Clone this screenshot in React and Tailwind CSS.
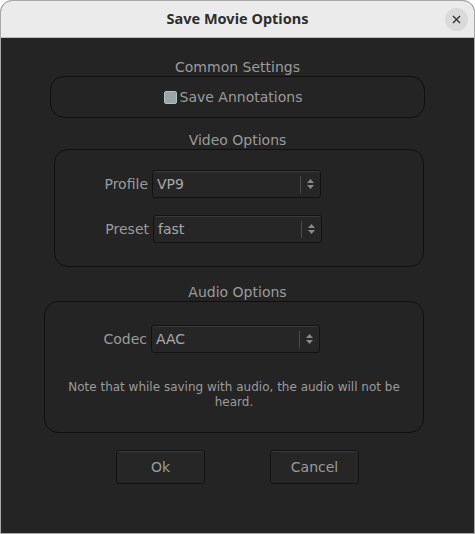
import { useState } from 'react';

const font = { fontFamily: '"DejaVu Sans", "Liberation Sans", sans-serif' };

function Combo({ value }) {
  return (
    <div className="flex h-[28px] w-[169px] items-center rounded-[3px] border border-[#121212] bg-[#262626] shadow-[inset_0_1px_0_#3a3a3a]">
      <span className="flex-1 pl-[4px] text-[14px] text-[#a8a8a8]">{value}</span>
      <span className="h-[17px] w-px bg-[#4a4a4a]" />
      <span className="flex w-[19px] flex-col items-center justify-center gap-[2px]">
        <svg width="7" height="4" viewBox="0 0 7 4"><path d="M0 4 L3.5 0 L7 4 Z" fill="#8a8a8a" /></svg>
        <svg width="7" height="4" viewBox="0 0 7 4"><path d="M0 0 L3.5 4 L7 0 Z" fill="#8a8a8a" /></svg>
      </span>
    </div>
  );
}

function Row({ label, value, labelW }) {
  return (
    <div className="flex items-center">
      <span className={`${labelW} pr-[4px] text-right text-[14px] text-[#9b9b9b]`}>{label}</span>
      <Combo value={value} />
    </div>
  );
}

function GroupTitle({ children, className }) {
  return (
    <div className={`h-[16px] text-center text-[14px] leading-[16px] text-[#9b9b9b] ${className}`}>{children}</div>
  );
}

export default function App() {
  const [saveAnn, setSaveAnn] = useState(false);

  return (
    <div className="h-[534px] w-[475px] bg-white" style={font}>
      <div className="flex h-[534px] w-[475px] flex-col overflow-hidden rounded-t-[12px] border border-[#a8a8a8] bg-[#242424]">
        <div className="relative flex h-[37px] shrink-0 items-center justify-center border-b border-[#bdbdbd] bg-[#ebebeb]">
          <span className="text-[14.5px] font-bold text-[#2e2e2e]" style={{ fontFamily: '"Noto Sans", sans-serif' }}>
            Save Movie Options
          </span>
          <button className="absolute right-[6px] top-[7px] flex h-[23px] w-[23px] items-center justify-center rounded-full bg-[#dadada]">
            <svg width="9" height="9" viewBox="0 0 9 9">
              <path d="M1 1 L8 8 M8 1 L1 8" stroke="#333" strokeWidth="1.4" />
            </svg>
          </button>
        </div>

        <GroupTitle className="mt-[21px]">Common Settings</GroupTitle>
        <div className="ml-[49px] mt-[1px] flex h-[42px] w-[375px] items-center justify-center rounded-[14px] border border-[#0f0f0f] pr-[9px]">
          <label className="flex cursor-pointer items-center">
            <span
              onClick={() => setSaveAnn(!saveAnn)}
              className="mr-[3px] h-[13px] w-[13px] rounded-[2px] border border-[#b3bebe] bg-[#98a6a6]"
            />
            <span className="text-[14px] text-[#9b9b9b]">Save Annotations</span>
          </label>
        </div>

        <GroupTitle className="mt-[14px]">Video Options</GroupTitle>
        <div className="ml-[53px] mt-[1px] flex h-[118px] w-[370px] flex-col gap-[17px] rounded-[14px] border border-[#0f0f0f] pt-[20px]">
          <Row label="Profile" value="VP9" labelW="w-[97px]" />
          <Row label="Preset" value="fast" labelW="w-[98px]" />
        </div>

        <GroupTitle className="mt-[17px]">Audio Options</GroupTitle>
        <div className="ml-[43px] mt-[1px] flex h-[132px] w-[380px] flex-col rounded-[14px] border border-[#0f0f0f] pt-[23px]">
          <Row label="Codec" value="AAC" labelW="w-[106px]" />
          <p className="mx-auto mt-[27px] w-[350px] text-center text-[12px] leading-[15px] text-[#9b9b9b]">
            Note that while saving with audio, the audio will not be heard.
          </p>
        </div>

        <div className="mt-[17px] flex">
          <button className="ml-[115px] h-[34px] w-[89px] rounded-[3px] border border-[#121212] bg-[#262626] text-[14px] text-[#9b9b9b] shadow-[inset_0_1px_0_#3a3a3a]">
            Ok
          </button>
          <button className="ml-[65px] h-[34px] w-[89px] rounded-[3px] border border-[#121212] bg-[#262626] text-[14px] text-[#9b9b9b] shadow-[inset_0_1px_0_#3a3a3a]">
            Cancel
          </button>
        </div>
      </div>
    </div>
  );
}
